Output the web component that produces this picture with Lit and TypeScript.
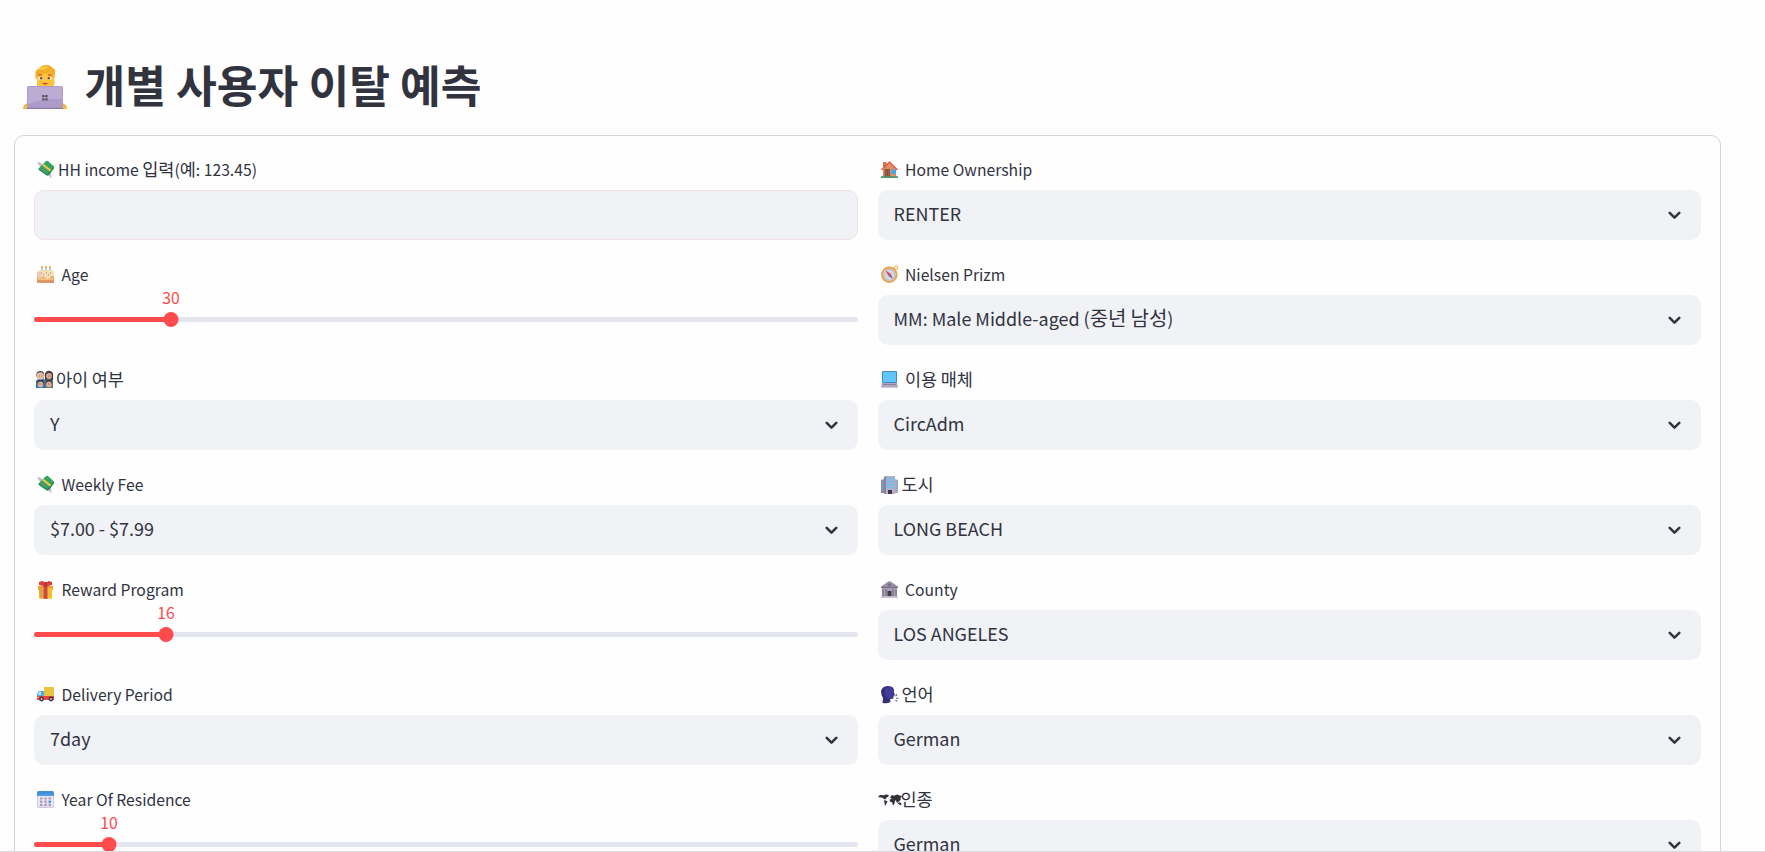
import { LitElement, html, css, svg, nothing } from "lit";
import { customElement, property } from "lit/decorators.js";

const money = svg`<path d="M0 1.500 3 1.300 6 4 4 7ZM10 13 14.500 17.500 14 11Z" fill="#c5bccb"/><path d="M9 0Q10.500-.5 11.500 .5L17 5.500V7L11.500 14 10 14.500 2 9 1.500 7.500Z" fill="#31a562"/><path d="M1.500 7.500 10 13.300 17 6v1.200L11.500 14.200 10 14.500 2 9Z" fill="#258350"/><path d="m5 4.200 1.500-1.400 7.700 6-1.400 1.700Z" fill="#f3c546"/><circle cx="6.500" cy="9" r="1.800" fill="#6f8a80"/>`;

const icons: Record<string, unknown> = {
  money,
  cake: svg`<path d="M1 5Q1 4 3 4H15Q17 4 17 6V17H0V7Z" fill="#f6dfb5"/><path d="M0 6h4v6H0Z" fill="#f1c9b8"/><path d="M0 11q2 2 4 .5t5 .5 4-.5 4-1V17H0Z" fill="#eda96b"/><path d="M0 14h17v3H0Z" fill="#dc9668"/><path d="M1 13h15" stroke="#ffd59a"/><path d="M5 4V1M9 4V1M13 4V1" stroke="#86b8ad" stroke-width="1.200"/><path d="M5 2V0M9 2V0M13 2V0" stroke="#efa53e" stroke-width="1.500"/><path d="M4 7h1m4 0h1m3 0h1M6 9h1m4 0h1" stroke="#a77f75"/>`,
  family: svg`<path d="M0 17V10L3 7H7L9 9 11 7H15L17 10V17Z" fill="#2f70b5"/><path d="M9 17V9l2-1h4l2 2v7Z" fill="#56776d"/><path d="M0 11H4V17H0Z" fill="#1978ce"/><circle cx="4.300" cy="4" r="4" fill="#4b414a"/><circle cx="13" cy="4" r="4.200" fill="#493c40"/><path d="M9 4h2v5H9zM15 4h2v5h-2z" fill="#493c40"/><circle cx="4.300" cy="5" r="3.700" fill="#e2bea5"/><circle cx="13" cy="5" r="2.900" fill="#d9a991"/><circle cx="4.500" cy="12" r="3.200" fill="#39343a"/><circle cx="13" cy="12" r="3.200" fill="#39343a"/><circle cx="4.500" cy="13.400" r="2.900" fill="#e1af94"/><circle cx="13" cy="13.400" r="2.900" fill="#e1af94"/><path d="M3 5h.6m1.800 0h.6M12 5h.6m1.400 0h.6M3.500 13h.6m1.500 0h.6M12 13h.6m1.400 0h.6" stroke="#60403a"/>`,
  gift: svg`<path d="M1 5h15v4H1Z" fill="#ef9d2d"/><path d="M2 7h13v10l-1 .8H3L2 17Z" fill="#f7bd2f"/><path d="M2 7h4v10H3Z" fill="#dfa04a"/><path d="M6.500 5h4v12.800h-4Z" fill="#c94747"/><path d="M2 4V1l3-1 3.500 1.500L12 0l3 1v3l-4 1H6Z" fill="#dc3e3d"/><path d="M7 1h3v5H7Z" fill="#b93744"/>`,
  truck: svg`<path d="M7 1h9.500q.5 0 .5 1v9H7Z" fill="#ecc341"/><path d="M2 5h5v7H0V8Z" fill="#53a8e7"/><path d="m2 6 2-.5V9H1Z" fill="#c3e7fb"/><path d="M0 10h17v4H0Z" fill="#ee4343"/><path d="M0 11h2v1H0Z" fill="#ffbd4a"/><circle cx="4.500" cy="13" r="2.400" fill="#3d3445"/><circle cx="14" cy="13" r="2.400" fill="#3d3445"/><circle cx="4.500" cy="13" r="1" fill="#d1c8d3"/><circle cx="14" cy="13" r="1" fill="#d1c8d3"/>`,
  calendar: svg`<rect width="17" height="17" rx="2" fill="#d3cade"/><path d="M1 4h15v11.500H1Z" fill="#e9e7f1"/><path d="M0 5V2Q0 0 2 0h13q2 0 2 2v3Z" fill="#3f8fda"/><path d="M1 4h15" stroke="#67abe6"/><path d="M3 7.500h2.500M7.300 7.500h2.500m1.700 0h2.500M3 10.700h2.500M7.300 10.700h2.500M3 13.800h2.500M7.300 13.800h2.500m1.700 0h2.500" stroke="#aa9cba" stroke-width="2.200"/><path d="M11.500 10.700h2.500" stroke="#3e8fd7" stroke-width="2.200"/>`,
  house: svg`<path d="M2 1h3.500v6H2Z" fill="#c57852"/><path d="M2 8 8.500 2 15 8v8H2Z" fill="#d99265"/><path d="M0 8.500 8.500 0 17 8.500l-1 1-7.500-7.300L1 9.500Z" fill="#e65845"/><path d="M3.500 8H9v8H3.500Z" fill="#84513c"/><path d="M5 9v6m2.500-6v6" stroke="#a66446"/><path d="M10.500 8.500H15v4.500h-4.500Z" fill="#3fa9ed"/><path d="M0 15.200h17v1.800H0Z" fill="#4b9a68"/>`,
  compass: svg`<circle cx="15" cy="1.800" r="1.700" fill="none" stroke="#e9a63d"/><circle cx="8.300" cy="8.800" r="7.300" fill="#d9d4e2" stroke="#e9a443" stroke-width="1.800"/><circle cx="8.300" cy="8.800" r="5.500" fill="none" stroke="#b8adc5" stroke-width=".8"/><path d="M4.500 4.500 9.700 7.800 7.500 10Z" fill="#dc4855"/><path d="m12 13-4.500-3L9.700 7.800Z" fill="#746a82"/>`,
  laptop: svg`<rect x="1" width="15" height="12" rx="1" fill="#428bc5"/><path d="M2 1h13v10H2Z" fill="#61c7fb"/><path d="M1 12h15l1 4v1H0v-1Z" fill="#b5a4c4"/><path d="M2 13.500h13" stroke="#8d7f9d"/><path d="M0 16.500h17" stroke="#d2c8db"/>`,
  building: svg`<path d="M0 4 3 3V17H0Z" fill="#918aa5"/><path d="M14 3l3 1v13h-3Z" fill="#b3a6ba"/><path d="M4 0h10v18H3V1Z" fill="#bcb0c6"/><path d="M3 1 5 0v18H3Z" fill="#8b8299"/><path d="M5.500 2.500h2M8.500 2.500h2M11.500 2.500h2M5.500 5.500h2M8.500 5.500h2M11.500 5.500h2M5.500 8.500h2M8.500 8.500h2M11.500 8.500h2M5.500 11.500h2M8.500 11.500h2M11.500 11.500h2" stroke="#56bdf7" stroke-width="2"/><path d="M1.500 5v10M16 5v10" stroke="#56afe5" stroke-dasharray="2 1"/><path d="M7 14h4v4H7Z" fill="#3d3743"/>`,
  bank: svg`<path d="M0 7V5.500L6 1.500Q8.500-1 11 1.500L17 5.500V7Z" fill="#9a8da6"/><path d="M1 7h15v9H1Z" fill="#aaa0b4"/><circle cx="8.500" cy="4" r="1.800" fill="#777482"/><path d="M0 6.500h17" stroke="#776b83"/><path d="M2 8v7m3-7v7m7-7v7m3-7v7" stroke="#706779"/><path d="M6.500 10h4v5h-4Z" fill="#443c4b"/><path d="M0 16h17" stroke="#c8bed0" stroke-width="1.800"/>`,
  speaking: svg`<path d="M1.500 17 2 12Q0 9 0 5 1 .5 6.500 0 12.500 0 13 4l-.3 2L14 9l-1.500.8-.2 2.700-3.300.7L9.500 16Q6 18 1.500 17Z" fill="#353075"/><path d="M4 3Q6 .5 10 1l2.500 3-.5 3 1.300 2-1.800 3-3.500 1-4-4Z" fill="#413d9c"/><path d="m14.500 10 1.700-1.500M15 12.200h2.300m-2.800 2 1.700 1" stroke="#66627c" stroke-width="1.100"/>`,
};

const person = svg`<path d="M0 44Q0 39 5 38l5 6Zm44 0q0-5-5-6l-5 6Z" fill="#f5bb3d"/><path d="M14 14h16v9H14Z" fill="#f1a633"/><rect x="14" y="4" width="17.500" height="20" rx="6" fill="#ffc43b"/><path d="M12.500 15V7q1-3 4-4 2-3 6-3 5-.5 7 3 3.500 1 2.500 5l-1 5-3-5q-6 1-12 1Z" fill="#f4ac2b"/><path d="M15 4q4-4 11-2-3 3-9 3Z" fill="#fdc93f"/><path d="M15.500 10.300q1.500-1 3.500 0m6 0q2-1 3.500 0" stroke="#d75838" fill="none" stroke-width="1.400"/><ellipse cx="17.700" cy="13.300" rx="2.200" ry="1.500" fill="#fff"/><ellipse cx="26.300" cy="13.300" rx="2.200" ry="1.500" fill="#fff"/><circle cx="18.200" cy="13.300" r="1.300" fill="#6e4a3d"/><circle cx="25.800" cy="13.300" r="1.300" fill="#6e4a3d"/><path d="M19 18q3 3.500 6 0Z" fill="#c8443d"/><rect x="4" y="21" width="36" height="23" rx="1.500" fill="#ae9bc9"/><path d="M5 22h34v12q-16-1-34 5Z" fill="#bcabd3"/><path d="M4 42.800h36V44H4Z" fill="#8c7aa8"/><path d="M19.200 31.200h2.200m.9 0h2.200m-5.300 3.100h2.200m.9 0h2.200" stroke="#4d4d57" stroke-width="2.300"/>`;

const worldMap = svg`<path d="m0 2 3-1 3 .3L8 .5l3 .5L10 3 8.500 3.500 7.500 5.500 6 5 4 3.500 1.500 3.500Zm6 4 3.500 1.200L8.500 9.500 7 12 6.500 9ZM12 3.500l2-2.500 2 .7L19 .5l2 .8 3 .7-1 1.500-.5.3.2 2-1.700 1.700L19 9 18 6.500h-1L16.500 9.500 15 11.500 14 8.300l-2.300-.7.3-2 1.700-.9Zm7.500 5.500 2.700-.8 1.500 2-1.700 1Z" fill="#30323a"/>`;

const HANGUL = /([\uac00-\ud7a3]+)/;

/** Sets Hangul at full size and everything else in the smaller Latin size. */
function mixed(text: string) {
  return text
    .split(HANGUL)
    .filter((part) => part !== "")
    .map((part) => (HANGUL.test(part) ? part : html`<span class="latin">${part}</span>`));
}

const sharedText = css`
  .latin {
    font-size: 0.898em;
    white-space: pre;
  }
`;

interface Field {
  icon: string;
  label: string;
  kind: "text" | "select" | "slider";
  tight?: boolean;
  value?: string;
  percent?: number;
}

const left: Field[] = [
  { icon: "money", label: "HH income 입력(예: 123.45)", kind: "text", tight: true },
  { icon: "cake", label: "Age", kind: "slider", value: "30", percent: 16.64 },
  { icon: "family", label: "아이 여부", kind: "select", value: "Y", tight: true },
  { icon: "money", label: "Weekly Fee", kind: "select", value: "$7.00 - $7.99" },
  { icon: "gift", label: "Reward Program", kind: "slider", value: "16", percent: 16.03 },
  { icon: "truck", label: "Delivery Period", kind: "select", value: "7day" },
  { icon: "calendar", label: "Year Of Residence", kind: "slider", value: "10", percent: 9.11 },
];

const right: Field[] = [
  { icon: "house", label: "Home Ownership", kind: "select", value: "RENTER" },
  { icon: "compass", label: "Nielsen Prizm", kind: "select", value: "MM: Male Middle-aged (중년 남성)" },
  { icon: "laptop", label: "이용 매체", kind: "select", value: "CircAdm" },
  { icon: "building", label: "도시", kind: "select", value: "LONG BEACH", tight: true },
  { icon: "bank", label: "County", kind: "select", value: "LOS ANGELES" },
  { icon: "speaking", label: "언어", kind: "select", value: "German", tight: true },
  { icon: "map", label: "인종", kind: "select", value: "German", tight: true },
];

@customElement("form-field")
class FormField extends LitElement {
  @property({ attribute: false }) field!: Field;

  static styles = [
    sharedText,
    css`
      :host {
        display: block;
        height: 85px;
      }
      .label {
        display: flex;
        align-items: center;
        height: 30px;
        margin-bottom: 5px;
        font-size: 17.5px;
        line-height: 28px;
        white-space: nowrap;
      }
      .caption {
        padding-bottom: 2px;
      }
      .icon {
        flex: none;
        width: 17px;
        height: 18px;
        margin: 0 7.5px 0 3px;
        overflow: visible;
      }
      .icon.tight {
        margin-right: 4px;
      }
      .icon.family {
        margin: 0 3px 0 2px;
      }
      .icon.map {
        width: 24px;
        height: 12px;
        margin: 0 -1px 0 0;
      }
      .box {
        display: flex;
        align-items: center;
        justify-content: space-between;
        box-sizing: border-box;
        height: 50px;
        padding: 0 20px 0 16px;
        border-radius: 10px;
        background: #f0f2f6;
        font-size: 20px;
        line-height: 30px;
      }
      .box.text {
        border: 1px solid #f3dfe4;
      }
      .value {
        padding-bottom: 4px;
      }
      .chevron {
        width: 13px;
        height: 9px;
      }
      .track {
        position: relative;
        height: 5px;
        margin-top: 27px;
        border-radius: 3px;
        background: #e4e7f0;
      }
      .fill {
        height: 5px;
        border-radius: 3px;
        background: #ff4b4b;
      }
      .thumb {
        position: absolute;
        top: -5px;
        width: 15px;
        height: 15px;
        border-radius: 50%;
        background: #ff4b4b;
        transform: translateX(-50%);
      }
      .number {
        position: absolute;
        bottom: 15px;
        left: 50%;
        transform: translateX(-50%);
        color: #ff4b4b;
        font-size: 17.5px;
        line-height: 28px;
      }
    `,
  ];

  private control(f: Field) {
    if (f.kind === "slider") {
      return html`<div class="track">
        <div class="fill" style="width:${f.percent}%"></div>
        <div class="thumb" style="left:${f.percent}%">
          <div class="number">${mixed(f.value ?? "")}</div>
        </div>
      </div>`;
    }
    if (f.kind === "text") return html`<div class="box text"></div>`;
    return html`<div class="box">
      <div class="value">${mixed(f.value ?? "")}</div>
      <svg class="chevron" viewBox="0 0 13 9">
        <path d="M1.700 1.800 6.500 6.600l4.800-4.800" fill="none" stroke="#31333f" stroke-width="2.500" stroke-linecap="round" stroke-linejoin="round" />
      </svg>
    </div>`;
  }

  render() {
    const f = this.field;
    if (!f) return nothing;
    const isMap = f.icon === "map";
    return html`<div class="label">
        <svg class="icon ${f.tight ? "tight" : ""} ${f.icon}" viewBox=${isMap ? "0 0 24 12" : "0 0 17 18"}>
          ${isMap ? worldMap : icons[f.icon]}
        </svg>
        <div class="caption">${mixed(f.label)}</div>
      </div>
      ${this.control(f)}`;
  }
}

@customElement("app-root")
class AppRoot extends LitElement {
  static styles = css`
    :host {
      display: block;
      box-sizing: border-box;
      height: 852px;
      overflow: hidden;
      padding: 50px 44px 0 14px;
      border-bottom: 1px solid #d9dadd;
      background: #fefefe;
      color: #31333f;
      font-family: "Noto Sans CJK KR", "Noto Sans", sans-serif;
    }
    .title {
      display: flex;
      align-items: center;
      gap: 17.5px;
      height: 70px;
      margin: 0 0 15px;
      padding-left: 9px;
      font-size: 44.3px;
      font-weight: 700;
      line-height: 68px;
      white-space: nowrap;
    }
    .heading {
      padding-bottom: 2px;
    }
    .person {
      width: 44px;
      height: 44px;
      margin-top: 4px;
    }
    .form {
      display: grid;
      grid-template-columns: 1fr 1fr;
      gap: 20px;
      padding: 19px;
      border: 1px solid #d3d4d8;
      border-radius: 10px;
    }
    .column {
      display: flex;
      flex-direction: column;
      gap: 20px;
    }
  `;

  render() {
    return html`<h1 class="title">
        <svg class="person" viewBox="0 0 44 44">${person}</svg>
        <span class="heading">개별 사용자 이탈 예측</span>
      </h1>
      <div class="form">
        ${[left, right].map(
          (fields) => html`<div class="column">${fields.map((f) => html`<form-field .field=${f}></form-field>`)}</div>`,
        )}
      </div>`;
  }
}
